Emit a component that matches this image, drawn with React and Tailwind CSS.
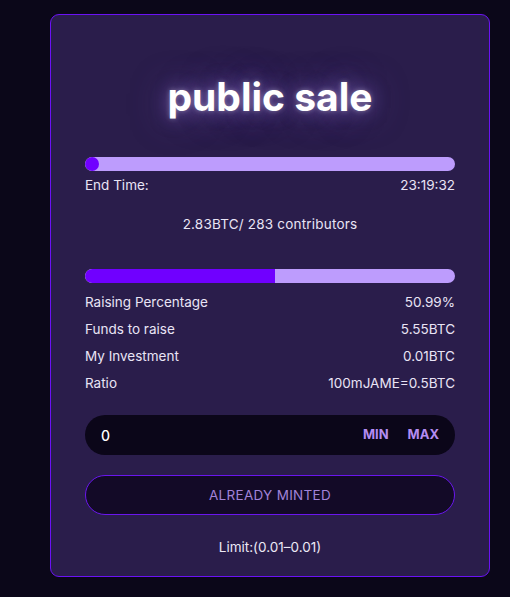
import React from "react";

function Row({ label, value }) {
  return (
    <div className="flex items-center justify-between h-[18px] text-[13.5px] leading-[18px] text-[#e9e4f5]">
      <span>{label}</span>
      <span>{value}</span>
    </div>
  );
}

export default function App() {
  return (
    <div className="min-h-[597px] w-[510px] bg-[#0b0719] pt-[14px] font-['Inter',sans-serif]">
      <div className="ml-[50px] w-[440px] h-[563px] rounded-[9px] border border-[#6b12f5] bg-[#2a1d4b] px-[34px] pt-[60px]">
        <div className="flex justify-center">
          <h1 className="relative h-[44px] text-[39px] leading-[44px] font-bold text-white [text-shadow:0_0_5px_rgba(255,255,255,0.35),0_0_18px_rgba(170,135,245,0.5),0_0_36px_rgba(140,105,220,0.55)]">
            public sale
          </h1>
        </div>

        <div className="mt-[38px] h-[14px] w-full rounded-full bg-[#bd9cfd] overflow-hidden">
          <div className="h-full w-[14px] rounded-full bg-[#7000ff]" />
        </div>
        <div className="mt-[5px]">
          <Row label="End Time:" value="23:19:32" />
        </div>

        <div className="mt-[21px] text-center text-[13.5px] leading-[18px] tracking-[0.2px] text-[#e9e4f5]">
          2.83BTC/ 283 contributors
        </div>

        <div className="mt-[36px] h-[14px] w-full rounded-full bg-[#bd9cfd] overflow-hidden">
          <div className="h-full w-[51.3%] rounded-l-full bg-[#7000ff]" />
        </div>

        <div className="mt-[10px] flex flex-col gap-[9px]">
          <Row label="Raising Percentage" value="50.99%" />
          <Row label="Funds to raise" value="5.55BTC" />
          <Row label="My Investment" value="0.01BTC" />
          <Row label="Ratio" value="100mJAME=0.5BTC" />
        </div>

        <div className="mt-[23px] flex h-[40px] items-center rounded-full bg-[#0b0619] pl-[16px] pr-[16px]">
          <span className="flex-1 text-[14px] font-medium text-white">0</span>
          <span className="text-[13px] font-bold text-[#b48cf2]">MIN</span>
          <span className="ml-[19px] text-[13px] font-bold text-[#b48cf2]">MAX</span>
        </div>

        <div className="mt-[20px] flex h-[40px] items-center justify-center rounded-full border border-[#6a16ee] bg-[#130a27] text-[13.5px] tracking-[0.3px] text-[#a283d9]">
          ALREADY MINTED
        </div>

        <div className="mt-[23px] text-center text-[13.5px] leading-[18px] text-[#ece8f5]">
          Limit:(0.01–0.01)
        </div>
      </div>
    </div>
  );
}
